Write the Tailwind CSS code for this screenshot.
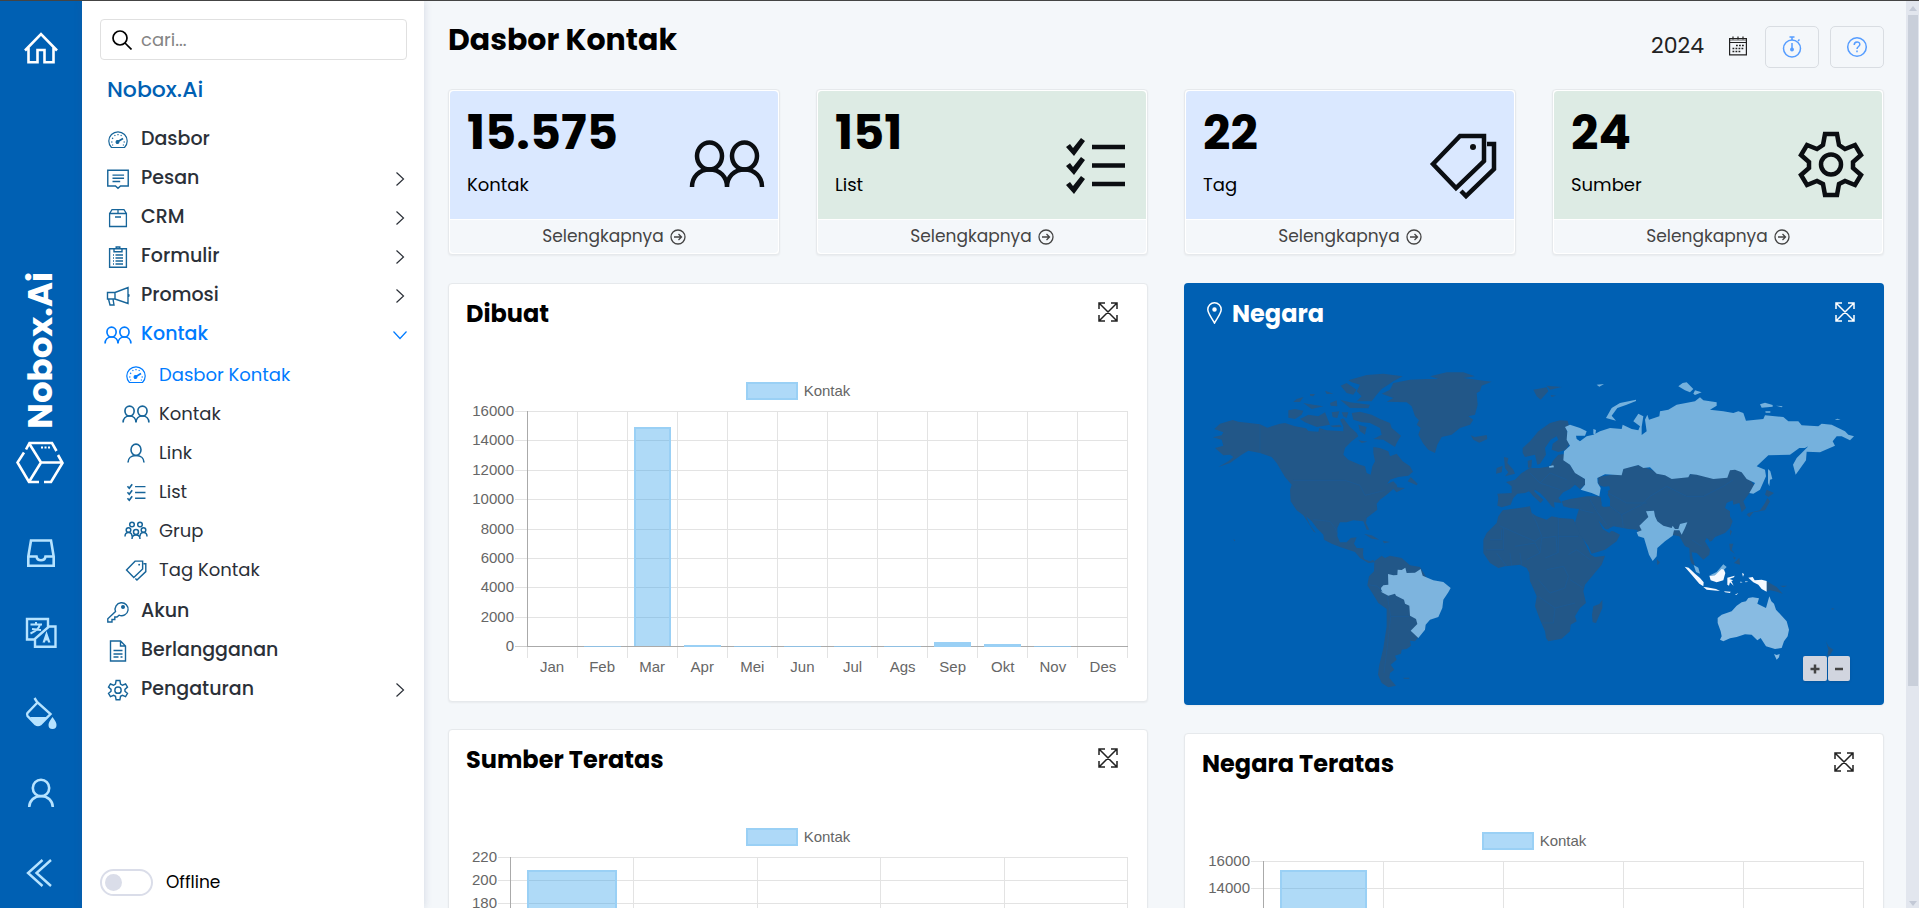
<!DOCTYPE html>
<html lang="id">
<head>
<meta charset="utf-8">
<meta name="viewport" content="width=device-width, initial-scale=1">
<title>Dasbor Kontak</title>
<script src="https://cdn.jsdelivr.net/npm/@tailwindcss/browser@4"></script>
</head>
<body class="flex h-screen overflow-hidden border-t border-[#444] bg-[#f4f7fa] font-[Poppins,Inter,sans-serif] text-black">

<svg class="hidden" xmlns="http://www.w3.org/2000/svg">
  <symbol id="people" viewBox="0 -1 76 76" fill="none" stroke="currentColor" stroke-width="4.5"><ellipse cx="20.500" cy="29" rx="12.500" ry="13.500"/><ellipse cx="55.500" cy="29" rx="12.500" ry="13.500"/><path d="M3 60c0-10 7-17.500 17.500-17.500S38 50 38 60c0-10 7-17.500 17.500-17.500S73 50 73 60"/></symbol>
  <symbol id="checks" viewBox="0 0 76 76"><path d="M35 21h33M35 39.500h33M35 58h33" fill="none" stroke="currentColor" stroke-width="4.500"/><path d="M9 21l4-3 3 4 8-10 4 3-11 15zM9 40l4-3 3 4 8-10 4 3-11 15zM9 59l4-3 3 4 8-10 4 3-11 15z" fill="currentColor"/></symbol>
  <symbol id="tags" viewBox="0 0 76 76" fill="none" stroke="currentColor" stroke-width="4.500"><path d="M8 38 35 10h24v25L31 62zM62 18h7v25L41 70l-5-5"/><circle cx="48" cy="21" r="3" fill="currentColor" stroke="none"/></symbol>
  <symbol id="gear" viewBox="0 0 76 76" fill="none" stroke="currentColor" stroke-width="4.500"><path d="M32 8h12l2 11 6 4 10-4 6 10-8 7v6l8 7-6 10-10-4-6 3-2 11H32l-2-11-6-3-10 4-6-10 8-7v-6l-8-7 6-10 10 4 6-4z"/><circle cx="38" cy="38.500" r="10"/></symbol>
  <symbol id="gauge" viewBox="0 0 20 20" fill="none" stroke="currentColor" stroke-width="1.200"><path d="M3.500 17.500C1.500 15.500.8 13.500.8 11a9.200 9.200 0 0 1 18.400 0c0 2.500-.7 4.500-2.700 6.500z"/><path d="M10 11.500l5-3" stroke-width="1.800"/><circle cx="9.500" cy="12" r="1.400" fill="currentColor"/><path d="M3 12h1.500M4 8l1.200.6M6.500 5l.8 1M10 4v1.300M13.500 5l-.7 1M15.500 12H17M4 15h1.200M14.800 15H16"/></symbol>
  <symbol id="message" viewBox="0 0 20 20" fill="none" stroke="currentColor" stroke-width="1.300"><path d="M.7 2h18.600v14.300h-7L10 18.500l-2.300-2.200h-7zM5 6.500h10.500M5 9.300h10.500M5 12.200h7"/></symbol>
  <symbol id="box" viewBox="0 0 20 20" fill="none" stroke="currentColor" stroke-width="1.300"><path d="M1.600 5.500h16.800v13H1.600zM1.600 5.500 4 1.700h12l2.400 3.800M10 1.700v3.800M7 9h6"/></symbol>
  <symbol id="form" viewBox="0 0 20 22" fill="none" stroke="currentColor" stroke-width="1.400"><path d="M1.600 2.700h16.800v18.600H1.600zM6 2.700v3h8v-3h-2.200V1H8.200v1.700zM5 9h1M7.500 9H15M5 12h1M7.500 12H15M5 15h1M7.500 15H15M5 18h1M7.500 18H15"/></symbol>
  <symbol id="horn" viewBox="0 0 24 20" fill="none" stroke="currentColor" stroke-width="1.400"><path d="M1.500 6.500h7.500L22 1.500v16L9 13H1.500zM9 6.500V13M2.500 13l1.500 6h4l-1-6M22 8c1.300.5 1.300 2.500 0 3"/></symbol>
  <symbol id="person" viewBox="0 0 20 20" fill="none" stroke="currentColor" stroke-width="1.600"><ellipse cx="10" cy="6.800" rx="5" ry="5.700"/><path d="M2 19.500c0-4 3-7 8-7s8 3 8 7"/></symbol>
  <symbol id="group" viewBox="0 0 24 20" fill="none" stroke="currentColor" stroke-width="1.500"><circle cx="8" cy="3.500" r="2.300"/><circle cx="16" cy="3.500" r="2.300"/><circle cx="4.500" cy="9" r="2.300"/><circle cx="19.500" cy="9" r="2.300"/><circle cx="12" cy="11" r="2.500"/><path d="M1 15.500c0-2.500 1.500-4 3.500-4S8 13 8 15.500M16 15.500c0-2.500 1.500-4 3.500-4s3.500 1.500 3.500 4M8 18c0-2.500 1.500-4 4-4s4 1.500 4 4"/></symbol>
  <symbol id="key" viewBox="0 0 22 22" fill="none" stroke="currentColor" stroke-width="1.400"><path d="M8.500 10.500a6.500 6.500 0 1 1 3.500 3.700L10 16H7.800v2.500H5V21H.8v-3.300z"/><circle cx="16" cy="6" r="1.300" fill="currentColor"/></symbol>
  <symbol id="doc" viewBox="0 0 20 22" fill="none" stroke="currentColor" stroke-width="1.400"><path d="M2.500 1h10l5 5v15h-15zM12.500 1v5h5M5.500 10.500h9M5.500 14h9M5.500 17h5M12.500 17h2"/></symbol>
  <symbol id="chev" viewBox="0 0 10 16" fill="none" stroke="currentColor" stroke-width="1.200"><path d="M1.500 1.500 8.500 8l-7 6.500"/></symbol>
  <symbol id="expand" viewBox="0 0 20 20" fill="none" stroke="currentColor" stroke-width="1.500"><path d="M1 7V1h6M13 1h6v6M19 13v6h-6M7 19H1v-6M1 1l18 18M19 1 1 19"/></symbol>
  <symbol id="go" viewBox="0 0 16 16" fill="none" stroke="currentColor" stroke-width="1.300"><circle cx="8" cy="8" r="7"/><path d="M4 8h7.500M8.500 5l3 3-3 3"/></symbol>
</svg>

<!-- Icon rail -->
<nav aria-label="Utama" class="flex w-[82px] shrink-0 flex-col items-center bg-[#0060b3] pt-[31px] pb-[19px] text-[#b6e3ff]">
  <a href="#" aria-label="Beranda" class="text-white">
    <svg class="size-[34px]" viewBox="0 0 34 34" fill="none" stroke="currentColor" stroke-width="2.600"><path d="M1 18.500 17 2l16 16.500M4.500 15.500v14.700h9V18h7v12.200h9V15.500"/></svg>
  </a>
  <div class="mt-auto mr-[2px] flex flex-col items-center gap-3 text-white">
    <span class="rotate-180 text-[34px] leading-9 font-bold [writing-mode:vertical-rl]">Nobox.Ai</span>
    <svg class="h-[43px] w-12" viewBox="0 0 48 43" fill="none" stroke="currentColor" stroke-width="2.600"><path d="M8 11.500 1.500 21.500 13 41h10M10 8.500 13.500 2H36l4.500 8M42 14l4.500 8L35 41h-7M13.500 3 25 21.500h21M25 21.500 13.500 40"/><path d="M25 6.500h9" stroke-dasharray="2 1.500" stroke-width="2.200"/></svg>
  </div>
  <div class="mt-[53px] flex flex-col items-center gap-12">
    <button type="button" aria-label="Kotak masuk"><svg class="size-8" viewBox="0 0 32 32" fill="none" stroke="currentColor" stroke-width="2.600"><path d="M3.300 19.500 6 3.500h20l2.700 16v9.200H3.300zM3.300 19.500h8.200c.8 5 8.200 5 9 0h8.200"/></svg></button>
    <button type="button" aria-label="Bahasa"><svg class="size-8" viewBox="0 0 32 32" fill="none" stroke="currentColor" stroke-width="2.400"><path d="M10 22.500H2V2h21v8M24 9.500h6.500v20.300H10v-8z"/><path d="M5.500 7.500H17M11 5v2.500M15 7.500c-1 4-5 7-9.500 9M7 12l9 1" stroke-width="2"/><path d="M17.500 25.500 21.500 14l4 11.500h-2.500l-.5-2h-2l-.5 2z" fill="currentColor" stroke="none"/></svg></button>
    <button type="button" aria-label="Tema"><svg class="size-8" viewBox="0 0 32 32" fill="none" stroke="currentColor" stroke-width="2.400"><path d="M9.500 1 12 5 25.500 17 15.500 27.200q-2.500 1.500-5 0L2.500 19q-1-1.500 0-3L12.500 5.500"/><path d="M5 20h18l-8 8q-2 1-4 0zM27.500 20c3 4 4 6 4 8a4 4 0 0 1-8 0c0-2 1-4 4-8z" fill="currentColor" stroke="none"/></svg></button>
    <button type="button" aria-label="Profil"><svg class="size-8" viewBox="0 0 32 32" fill="none" stroke="currentColor" stroke-width="2.600"><circle cx="16" cy="11" r="8.200"/><path d="M4.200 30c0-6 5-11 11.800-11s11.800 5 11.800 11"/></svg></button>
    <button type="button" aria-label="Ciutkan"><svg class="size-8" viewBox="0 0 32 32" fill="none" stroke="currentColor" stroke-width="2.400"><path d="M17.500 3 3 16l14.500 13M26 3 11.500 16 26 29"/></svg></button>
  </div>
</nav>

<!-- Menu -->
<aside class="flex w-[342px] shrink-0 flex-col bg-white pt-[18px] pr-[17px] pb-3 pl-[18px] text-[19px] font-medium text-[#2b3038] shadow-[0_0_8px_rgba(60,80,120,0.18)]">
  <label class="flex h-[41px] items-center gap-[9px] rounded border border-[#e0e0e0] pl-[11px]">
    <svg class="size-5 shrink-0 text-black" viewBox="0 0 20 20" fill="none" stroke="currentColor" stroke-width="1.700"><circle cx="8" cy="8" r="7"/><path d="m13 13 6.500 6.500"/></svg>
    <input type="search" placeholder="cari..." aria-label="cari" class="w-full bg-transparent text-[18px] font-normal outline-none placeholder:text-[#858585]">
  </label>
  <h2 class="mt-[15px] ml-[7px] text-[22px] leading-[30px] text-[#0060b3]">Nobox.Ai</h2>
  <ul class="mt-[15px] text-[#2b3038]">
    <li><a href="#" class="flex h-[39px] items-center gap-[9px]"><svg class="ml-1 h-5 w-7 text-[#17659a]"><use href="#gauge"/></svg>Dasbor</a></li>
    <li><a href="#" class="flex h-[39px] items-center gap-[9px]"><svg class="ml-1 h-[22px] w-7 text-[#17659a]"><use href="#message"/></svg>Pesan<svg class="mr-[2px] ml-auto h-4 w-[10px]"><use href="#chev"/></svg></a></li>
    <li><a href="#" class="flex h-[39px] items-center gap-[9px]"><svg class="ml-1 h-5 w-7 text-[#17659a]"><use href="#box"/></svg>CRM<svg class="mr-[2px] ml-auto h-4 w-[10px]"><use href="#chev"/></svg></a></li>
    <li><a href="#" class="flex h-[39px] items-center gap-[9px]"><svg class="ml-1 h-[22px] w-7 text-[#17659a]"><use href="#form"/></svg>Formulir<svg class="mr-[2px] ml-auto h-4 w-[10px]"><use href="#chev"/></svg></a></li>
    <li><a href="#" class="flex h-[39px] items-center gap-[9px]"><svg class="ml-1 h-5 w-7 text-[#17659a]"><use href="#horn"/></svg>Promosi<svg class="mr-[2px] ml-auto h-4 w-[10px]"><use href="#chev"/></svg></a></li>
    <li>
      <a href="#" class="flex h-[39px] items-center gap-[9px] text-[#007bff]"><svg class="ml-1 size-7"><use href="#people"/></svg>Kontak<svg class="mr-[2px] ml-auto h-4 w-[10px] rotate-90"><use href="#chev"/></svg></a>
      <ul class="pt-px pb-[3px] pl-[18px] text-[18px] font-normal">
        <li><a href="#" aria-current="page" class="flex h-[39px] items-center gap-[9px] text-[#007bff]"><svg class="ml-1 h-5 w-7"><use href="#gauge"/></svg>Dasbor Kontak</a></li>
        <li><a href="#" class="flex h-[39px] items-center gap-[9px]"><svg class="ml-1 size-7 text-[#17659a]"><use href="#people"/></svg>Kontak</a></li>
        <li><a href="#" class="flex h-[39px] items-center gap-[9px]"><svg class="ml-1 h-5 w-7 text-[#17659a]"><use href="#person"/></svg>Link</a></li>
        <li><a href="#" class="flex h-[39px] items-center gap-[9px]"><svg class="ml-1 h-6 w-7 text-[#17659a]"><use href="#checks"/></svg>List</a></li>
        <li><a href="#" class="flex h-[39px] items-center gap-[9px]"><svg class="ml-1 h-5 w-7 text-[#17659a]"><use href="#group"/></svg>Grup</a></li>
        <li><a href="#" class="flex h-[39px] items-center gap-[9px]"><svg class="ml-1 h-6 w-7 text-[#17659a]"><use href="#tags"/></svg>Tag Kontak</a></li>
      </ul>
    </li>
    <li><a href="#" class="flex h-[39px] items-center gap-[9px]"><svg class="ml-1 h-[22px] w-7 text-[#17659a]"><use href="#key"/></svg>Akun</a></li>
    <li><a href="#" class="flex h-[39px] items-center gap-[9px]"><svg class="ml-1 h-[22px] w-7 text-[#17659a]"><use href="#doc"/></svg>Berlangganan</a></li>
    <li><a href="#" class="flex h-[39px] items-center gap-[9px]"><svg class="ml-1 h-6 w-7 text-[#17659a]"><use href="#gear"/></svg>Pengaturan<svg class="mr-[2px] ml-auto h-4 w-[10px]"><use href="#chev"/></svg></a></li>
  </ul>
  <label class="mt-auto flex items-center gap-[13px] text-[17px] font-normal text-black">
    <input type="checkbox" class="h-[27px] w-[53px] appearance-none rounded-full border-2 border-[#dadde9] before:mt-[3px] before:ml-[3px] before:block before:size-[17px] before:rounded-full before:bg-[#dadde9] checked:before:ml-7">
    Offline
  </label>
</aside>

<!-- Content -->
<main class="min-w-0 flex-1 overflow-y-auto pt-[25px] pr-[22px] pb-6 pl-6 [scrollbar-width:none]">
  <header class="flex h-[63px] items-start">
    <h1 class="text-[30px] leading-[28px] font-bold">Dasbor Kontak</h1>
    <div class="ml-auto flex items-center gap-[11px] text-[#222]">
      <button type="button" class="mr-[6px] flex items-center gap-6 pb-[2px] text-[22px] leading-8">2024
        <svg class="size-5" viewBox="0 0 20 20" fill="none" stroke="currentColor" stroke-width="1.200"><path d="M1.600 2.500h16.800v16.300H1.600zM1.600 6.500h16.800M5 .5v3M10 .5v3M15 .5v3"/><path d="M1.600 4h16.800" stroke-opacity=".6"/><path d="M8 9.500h8M4.500 12.500H16M4.500 15.500H13" stroke-dasharray="1.800 1.200" stroke-width="1.600"/></svg>
      </button>
      <button type="button" aria-label="Waktu" class="flex h-[42px] w-[54px] items-center justify-center rounded-[5px] border border-[#d9dde2] text-[#569dff]"><svg class="size-[22px]" viewBox="0 0 22 22" fill="none" stroke="currentColor" stroke-width="1.500"><circle cx="11" cy="12.500" r="8.500"/><path d="M8.500 1h5M11 1v3M17 5l1.500-1.500M11 7v8"/><circle cx="11" cy="13.500" r="1.200" fill="currentColor"/></svg></button>
      <button type="button" aria-label="Bantuan" class="flex h-[42px] w-[54px] items-center justify-center rounded-[5px] border border-[#d9dde2] text-[#569dff]"><svg class="size-[22px]" viewBox="0 0 22 22" fill="none" stroke="currentColor" stroke-width="1.500"><circle cx="11" cy="11" r="9.300"/><path d="M8.200 9c0-4 5.600-4 5.600-.5 0 2-2.800 2-2.800 4.500M11 14.500v1.700"/></svg></button>
    </div>
  </header>

  <section class="grid grid-cols-4 gap-9">
    <article class="rounded border border-[#e6e9ec] bg-white p-px shadow-xs">
      <div class="flex h-32 items-center justify-between rounded-t bg-[#dae8ff] pr-[13px] pl-[17px]"><div><p class="text-[48px] leading-[48px] font-bold">15.575</p><p class="mt-4 mb-1 text-[18px] leading-6">Kontak</p></div><svg class="mt-[18px] size-[76px] text-[#0b0e12]"><use href="#people"/></svg></div>
      <a href="#" class="mt-px flex h-[33px] items-center justify-center gap-[6px] rounded-b bg-[#f4f7fa] text-[17px] text-[#444]">Selengkapnya <svg class="size-4"><use href="#go"/></svg></a>
    </article>
    <article class="rounded border border-[#e6e9ec] bg-white p-px shadow-xs">
      <div class="flex h-32 items-center justify-between rounded-t bg-[#ddebe4] pr-[13px] pl-[17px]"><div><p class="text-[48px] leading-[48px] font-bold">151</p><p class="mt-4 mb-1 text-[18px] leading-6">List</p></div><svg class="mt-[18px] size-[76px] text-[#0b0e12]"><use href="#checks"/></svg></div>
      <a href="#" class="mt-px flex h-[33px] items-center justify-center gap-[6px] rounded-b bg-[#f4f7fa] text-[17px] text-[#444]">Selengkapnya <svg class="size-4"><use href="#go"/></svg></a>
    </article>
    <article class="rounded border border-[#e6e9ec] bg-white p-px shadow-xs">
      <div class="flex h-32 items-center justify-between rounded-t bg-[#dae8ff] pr-[13px] pl-[17px]"><div><p class="text-[48px] leading-[48px] font-bold">22</p><p class="mt-4 mb-1 text-[18px] leading-6">Tag</p></div><svg class="mt-[18px] size-[76px] text-[#0b0e12]"><use href="#tags"/></svg></div>
      <a href="#" class="mt-px flex h-[33px] items-center justify-center gap-[6px] rounded-b bg-[#f4f7fa] text-[17px] text-[#444]">Selengkapnya <svg class="size-4"><use href="#go"/></svg></a>
    </article>
    <article class="rounded border border-[#e6e9ec] bg-white p-px shadow-xs">
      <div class="flex h-32 items-center justify-between rounded-t bg-[#ddebe4] pr-[13px] pl-[17px]"><div><p class="text-[48px] leading-[48px] font-bold">24</p><p class="mt-4 mb-1 text-[18px] leading-6">Sumber</p></div><svg class="mt-[18px] size-[76px] text-[#0b0e12]"><use href="#gear"/></svg></div>
      <a href="#" class="mt-px flex h-[33px] items-center justify-center gap-[6px] rounded-b bg-[#f4f7fa] text-[17px] text-[#444]">Selengkapnya <svg class="size-4"><use href="#go"/></svg></a>
    </article>
  </section>

  <div class="mt-7 grid grid-cols-2 items-start gap-9">
    <div class="flex min-w-0 flex-col gap-[27px]">
      <section class="rounded border border-[#e6e9ec] bg-white pb-[25px] shadow-xs">
        <div class="flex items-start justify-between pt-[18px] pr-[29px] pl-[17px]"><h2 class="text-[24px] leading-[24px] font-bold">Dibuat</h2><button type="button" aria-label="Perbesar" class="text-[#222]"><svg class="size-5"><use href="#expand"/></svg></button></div>
        <div class="mt-[56px] flex h-[18px] items-center justify-center gap-[6px] font-[Liberation_Sans,sans-serif] text-[15px] text-[#666]"><span class="h-[18px] w-[52px] border-2 border-[#9ad0f5] bg-[#aed9f8]"></span>Kontak</div>
        <div class="mt-[2px] flex pr-[19px] font-[Liberation_Sans,sans-serif] text-[15px] leading-[18px] text-[#666]">
          <ol class="flex h-[253px] w-[66px] flex-col justify-between pr-px text-right"><li>16000</li><li>14000</li><li>12000</li><li>10000</li><li>8000</li><li>6000</li><li>4000</li><li>2000</li><li>0</li></ol>
          <div class="min-w-0 flex-1 pt-2">
            <svg class="block h-[248px] w-full" viewBox="0 0 613 248" preserveAspectRatio="none" shape-rendering="crispEdges" fill="none">
              <path stroke="#e3e3e3" d="M0 1.500h613M0 30.500h613M0 60.500h613M0 89.500h613M0 119.500h613M0 148.500h613M0 177.500h613M0 207.500h613M62.500 1v247M112.500 1v247M162.500 1v247M212.500 1v247M262.500 1v247M312.500 1v247M362.500 1v247M412.500 1v247M462.500 1v247M512.500 1v247M562.500 1v247M612.500 1v247M12.500 236v12"/>
              <path stroke="#aaa" d="M12.500 1v236M12 236.500h601"/><path stroke="#ccc" d="M0 236.500h12"/>
              <path fill="#36a2eb" fill-opacity=".4" d="M119 17h37v219h-37z"/><path stroke="#9ad0f5" stroke-width="2" d="M120 236V18h35v218"/>
              <path fill="#9ad0f5" d="M169 235h37v2h-37zM419 232h37v5h-37zM469 234h37v3h-37z"/><path stroke="#8fbfe2" d="M69 236.500h37M219 236.500h37M269 236.500h37M319 236.500h37M369 236.500h37M519 236.500h37"/>
            </svg>
            <div class="grid grid-cols-12 pl-3 text-center"><span>Jan</span><span>Feb</span><span>Mar</span><span>Apr</span><span>Mei</span><span>Jun</span><span>Jul</span><span>Ags</span><span>Sep</span><span>Okt</span><span>Nov</span><span>Des</span></div>
          </div>
        </div>
      </section>

      <section class="rounded border border-[#e6e9ec] bg-white pb-[25px] shadow-xs">
        <div class="flex items-start justify-between pt-[18px] pr-[29px] pl-[17px]"><h2 class="text-[24px] leading-[24px] font-bold">Sumber Teratas</h2><button type="button" aria-label="Perbesar" class="text-[#222]"><svg class="size-5"><use href="#expand"/></svg></button></div>
        <div class="mt-[56px] flex h-[18px] items-center justify-center gap-[6px] font-[Liberation_Sans,sans-serif] text-[15px] text-[#666]"><span class="h-[18px] w-[52px] border-2 border-[#9ad0f5] bg-[#aed9f8]"></span>Kontak</div>
        <div class="mt-[2px] flex pr-[19px] font-[Liberation_Sans,sans-serif] text-[15px] leading-[18px] text-[#666]">
          <ol class="flex h-[271px] w-[49px] flex-col justify-between pr-px text-right"><li>220</li><li>200</li><li>180</li><li>160</li><li>140</li><li>120</li><li>100</li><li>80</li><li>60</li><li>40</li><li>20</li><li>0</li></ol>
          <div class="min-w-0 flex-1 pt-2">
            <svg class="block h-[267px] w-full" viewBox="0 0 630 267" preserveAspectRatio="none" shape-rendering="crispEdges" fill="none">
              <path stroke="#e3e3e3" d="M0 1.500h630M0 24.500h630M0 47.500h630M0 70.500h630M0 93.500h630M0 116.500h630M0 139.500h630M0 162.500h630M0 185.500h630M0 208.500h630M0 231.500h630M135.500 1v265M259.500 1v265M382.500 1v265M506.500 1v265M629.500 1v265"/>
              <path stroke="#aaa" d="M12.500 1v254M0 254.500h630"/>
              <path fill="#36a2eb" fill-opacity=".4" d="M29 14h90v240H29z"/><path stroke="#9ad0f5" stroke-width="2" d="M30 254V15h88v239"/>
            </svg>
          </div>
        </div>
      </section>
    </div>

    <div class="flex min-w-0 flex-col gap-[28px]">
      <section class="relative rounded bg-[#0060b3] text-white shadow-xs">
        <div class="flex items-start justify-between pt-[19px] pr-[29px] pl-[23px]"><h2 class="flex items-start gap-[10px] text-[24px] leading-[24px] font-bold"><svg class="h-[22px] w-[15px]" viewBox="0 0 15 22" fill="none" stroke="currentColor" stroke-width="1.500"><path d="M7.500 21C4 15 .8 11 .8 7.500a6.700 6.700 0 0 1 13.400 0c0 3.500-3.200 7.500-6.700 13.500z"/><circle cx="7.500" cy="7.500" r="1.500" fill="currentColor"/></svg>Negara</h2><button type="button" aria-label="Perbesar"><svg class="size-5"><use href="#expand"/></svg></button></div>
        <svg role="img" aria-label="Peta dunia" class="mt-[27px] block w-full" viewBox="0 0 2100 1056">
          <!-- Western hemisphere -->
          <g transform="translate(-12 -40)" fill="#225788">
            <path d="M103 268 120 252 158 241 175 246 240 254 262 264 300 252 315 250 345 260 378 266 385 274 415 276 418 265 440 272 490 275 490 260 480 240 490 236 510 262 530 280 535 290 515 305 495 325 490 345 505 360 540 375 555 380 560 400 572 405 577 380 585 365 580 340 580 322 600 325 625 335 630 350 650 342 668 365 690 380 699 396 685 408 655 412 630 420 622 432 640 425 650 435 652 443 675 445 650 458 640 448 620 465 600 480 590 492 592 510 560 535 558 550 568 570 560 570 550 545 520 542 500 548 480 548 472 565 472 590 480 608 500 608 512 595 530 593 522 612 530 625 550 626 549 645 552 658 570 665 580 660 583 668 565 670 540 655 525 637 505 630 480 622 455 612 432 600 430 585 410 565 395 545 378 530 390 555 408 580 400 575 385 550 370 527 350 512 332 485 330 450 335 435 315 412 290 370 275 352 240 340 205 333 185 345 150 370 115 382 145 365 160 352 150 345 130 347 105 325 130 318 125 300 98 293 125 287 130 278z"/>
            <path d="M515 220 540 216 575 225 600 238 630 250 635 265 663 288 650 310 645 322 610 300 580 298 605 285 600 265 570 250 545 248 520 240zM505 122 560 106 610 102 668 110 640 125 625 135 605 148 590 165 575 185 530 185 545 170 530 155 540 135 515 128zM482 138 500 130 530 150 520 165 500 160zM480 180 510 188 570 195 565 206 510 205zM325 212 345 208 370 213 365 225 345 238 325 234zM360 238 385 225 415 230 435 218 450 255 410 262 375 248zM340 187 350 178 370 172 360 187zM370 190 400 195 430 200 395 208zM450 190 470 182 472 200 452 198zM455 218 478 215 472 235 458 232zM435 153 460 162 440 163zM485 218 505 218 500 235 490 230zM535 255 560 262 555 285 540 275zM535 302 562 306 545 310zM450 258 480 255 485 262 460 263zM390 163 405 163 400 170 390 168z"/>
            <path d="M683 425 692 412 713 432 710 437zM553 583 575 587 598 600 575 597zM608 603 630 607 612 611zM670 1014h18v3h-16zM160 599l6 2-3 4z"/>
            <path d="M605 162 630 150 640 130 690 120 740 118 775 118 750 110 800 98 850 98 885 110 850 115 900 122 935 126 905 138 900 155 890 160 893 195 885 225 865 230 880 240 870 255 840 265 815 285 785 292 772 315 765 340 745 330 730 312 715 285 722 265 710 255 717 242 705 230 695 200 680 188 620 186 640 175z"/>
            <path d="M872 287 885 292 920 286 922 298 898 309 880 300z"/>
            <path d="M583 665 605 648 615 655 630 648 665 655 690 677 720 682 740 715 735 860 712 896 705 905 690 903 693 918 680 928 665 930 663 942 645 948 650 960 632 975 643 990 630 1000 628 1015 648 1038 625 1043 605 1030 594 1005 597 980 610 925 620 860 620 808 595 790 580 765 562 737 567 710 582 695z"/>
            <path fill="#7db4de" d="M603 745 610 737 625 735 624 703 640 707 652 706 653 690 665 691 676 684 680 700 705 699 722 688 728 708 760 722 790 727 812 745 805 758 790 780 787 805 775 832 750 840 737 855 735 870 715 895 692 873 712 853 708 838 690 828 688 798 675 792 672 780 648 768 645 762 625 768 605 758z"/>
            <path fill="none" stroke="#195a98" stroke-width="2" d="M240 254v86M340 422h155l45 15 15 30 60-15M400 540l50 5 15 20 8 18M622 770l10 60-10 90-10 80M632 830l55 0M567 735l25 5 15 15"/>
          </g>
          <!-- Eastern hemisphere -->
          <g transform="translate(1038 -40)" fill="#225788">
            <path d="M10 150 50 143 55 155 32 180 20 170zM50 138 95 142 60 150zM62 166 78 168 65 172z"/>
            <path d="M-78 352-65 355-68 370-50 390-45 402-75 410-65 398-75 385zM-100 385-82 378-85 398-102 402zM-7 363 6 360 4 384-6 384z"/>
            <path d="M-22 325 0 305 25 275 60 250 90 242 113 243 118 262 110 270 120 310 108 330 85 337 65 330 68 312 85 300 80 290 62 300 45 325 48 345 30 372 22 375 15 345-15 352-22 340z"/>
            <path d="M-72 427-45 420-25 400 0 385 30 385 60 380 70 362 85 345 103 343 120 375 140 400 165 418 165 435 150 448 135 435 120 448 100 458 85 475 95 490 72 488 74 505 65 500 45 475 30 460 15 450 12 455 40 480 32 490 10 470-3 455-15 460-38 462-50 475-58 495-85 503-98 498-95 475-98 462-55 460-55 440z"/>
            <path d="M-82 512-55 508 0 500 5 520 20 530 50 540 65 530 90 535 130 538 140 560 155 590 170 620 182 645 195 652 225 648 215 675 190 705 165 735 160 755 168 790 150 805 135 830 140 845 122 855 120 875 95 897 55 905 48 895 45 875 30 840 15 800 20 770 5 735 0 725-2 700-10 685-30 675-75 680-95 685-120 670-140 640-140 600-130 580-100 550-95 530zM217 780 217 805 198 850 188 848 186 825 190 800 208 793z"/>
            <path d="M95 485 120 478 170 470 205 470 215 475 215 500 240 500 225 475 235 460 230 445 205 435 205 412 275 400 280 386 325 376 425 413 600 385 630 390 668 430 675 440 655 465 640 485 648 505 635 518 628 490 610 495 608 482 590 490 585 505 600 515 600 530 608 545 600 565 585 580 555 592 545 605 530 595 525 605 540 630 538 645 520 660 500 640 485 638 488 655 495 678 485 672 480 660 478 625 465 620 448 590 425 585 330 585 320 570 295 568 250 560 240 565 230 572 250 575 270 585 260 605 225 630 185 642 175 620 150 585 135 550 140 530 147 508 120 505 100 500z"/>
            <path fill="#0060b3" d="M205 542 225 568 245 572 238 580 218 568zM213 442 238 440 240 450 228 456 240 478 240 500 220 502 213 480z"/>
            <path d="M655 520 690 512 705 490 712 475 720 485 705 512 670 518 658 533 650 525zM710 450 732 460 715 472 705 465zM600 570 606 575 600 588zM598 612 610 612 605 630 615 642 600 632zM610 650 618 655 612 660zM612 670 628 655 630 675zM380 658 390 668 382 677zM535 598 546 596 540 608zM888 905 895 920 910 930 900 945 892 948 895 930zM885 948 880 955 868 955zM750 738 772 738 760 743zM838 822 848 830zM905 805 914 808 905 810z"/>
            <path d="M710 725 740 742 758 762 735 755 720 752 710 755z"/>
            <path fill="none" stroke="#195a98" stroke-width="2" d="M-92 558 15 605 35 590 20 550 5 520M85 535v105M85 590h60M30 640 35 595 78 590 82 640 45 655M-80 565v65h-50M-45 620 15 610 30 640-10 660M50 690 100 680 115 710 105 745 60 760 25 720M115 645 140 630 180 660M25 770 75 805 135 790M75 805 70 850 35 850M120 720 160 745M-120 600l35 0 0-30M-100 640l30 40M-60 640l5 38M-30 640l5 35M240 500l35 25 5 40M275 525l60-30 25-25 50-30 60 30 50 0 60-30 30 -20M235 460l55 30 60 0M180 480l20 35 30 40M150 510l40 10M440 580l20-30M485 600l30 20M0 400l30 30 30-30 50 20M30 430l60 20"/>
            <g fill="#75b1dd">
              <path d="M105 262 120 255 150 265 170 275 165 288 138 288 140 298 150 305 170 290 190 285 210 275 240 265 275 268 278 255 305 268 325 272 330 260 310 245 325 222 340 230 335 262 335 286 350 275 345 240 352 225 357 240 388 230 390 215 415 210 440 195 495 185 510 173 520 182 560 188 560 198 540 210 580 215 610 220 625 215 640 220 648 243 700 238 705 227 760 232 775 245 805 245 815 257 865 260 875 252 905 255 945 275 955 285 972 290 960 302 935 290 920 290 908 305 915 318 870 338 830 336 828 362 797 405 789 375 800 355 835 320 825 325 808 325 780 345 715 347 680 380 705 390 708 410 690 450 670 462 658 460 675 430 650 418 635 398 615 390 600 392 592 414 550 418 500 405 480 403 475 413 425 418 405 407 380 402 360 383 340 385 325 376 280 388 275 407 225 404 202 415 203 430 212 445 208 470 185 460 152 450 165 435 165 418 135 400 120 375 100 362 102 335 120 318 110 300 112 275z"/>
              <path d="M714 388 721 395 727 418 720 420 718 440 714 430zM228 235 245 205 270 190 318 180 318 184 290 195 262 205 245 228 258 243zM445 140 458 130 470 128 490 148 480 158 465 152zM490 162 495 152 515 158 495 166zM690 194 705 189 728 196 728 201 695 204zM738 198 758 200 755 203zM706 215h15v4h-14zM914 241 922 237 932 240zM200 135 222 133 208 141zM190 268l8 3-2 14-6-3zM57 380 70 377 72 383 58 384z"/>
              <path d="M348 515 372 513 375 530 382 545 400 558 425 565 428 558 435 568 445 568 450 553 472 548 465 565 455 585 448 572 432 572 428 588 405 605 382 625 380 650 368 664 357 645 342 595 325 590 320 578 335 572 328 558 355 532z"/>
              <path d="M491 676 505 684 510 702 498 697zM540 707 560 697 580 674 590 682 582 690 555 707z"/>
            </g>
            <path fill="#88bbe2" d="M563 835 575 825 605 815 620 798 635 788 648 785 655 775 668 773 687 776 682 792 708 805 718 770 724 785 732 792 738 810 770 845 777 870 773 890 762 905 755 925 735 928 708 920 692 895 682 902 665 885 645 884 620 892 600 896 580 905 570 900 575 890 572 875 563 850zM732 943 740 946 749 943 747 953 740 960z"/>
            <path fill="#f5f9ff" d="M464 681 476 684 495 702 510 715 521 728 520 740 508 732 485 705zM520 742 530 743 558 748 570 754 530 750zM538 708 555 707 575 688 582 690 586 700 580 722 560 728 542 722zM592 714 614 708 612 713 598 718 610 722 604 724 611 738 600 728 597 738 592 735zM655 714 668 712 674 722 695 720 710 724 710 756 695 748 685 735 670 728zM582 755l20 1-2 4-15-2zM614 765 625 760 620 765zM636 700l6 3-3 8zM630 726l8 1-6 2zM645 725l10 1-8 2z"/>
          </g>
        </svg>
        <div class="absolute right-[34px] bottom-6 flex gap-px">
          <button type="button" aria-label="Perbesar peta" class="flex h-[25px] w-6 items-center justify-center rounded-[2px] bg-[#d1d5df] text-[#444] shadow"><svg class="size-[10px]" viewBox="0 0 10 10" stroke="currentColor" stroke-width="2.500"><path d="M5 .5v9M.5 5h9"/></svg></button>
          <button type="button" aria-label="Perkecil peta" class="flex h-[25px] w-[22px] items-center justify-center rounded-[2px] bg-[#d1d5df] text-[#444] shadow"><svg class="size-[10px]" viewBox="0 0 10 10" stroke="currentColor" stroke-width="2.500"><path d="M1 5h8"/></svg></button>
        </div>
      </section>

      <section class="rounded border border-[#e6e9ec] bg-white pb-[25px] shadow-xs">
        <div class="flex items-start justify-between pt-[18px] pr-[29px] pl-[17px]"><h2 class="text-[24px] leading-[24px] font-bold">Negara Teratas</h2><button type="button" aria-label="Perbesar" class="text-[#222]"><svg class="size-5"><use href="#expand"/></svg></button></div>
        <div class="mt-[56px] flex h-[18px] items-center justify-center gap-[6px] font-[Liberation_Sans,sans-serif] text-[15px] text-[#666]"><span class="h-[18px] w-[52px] border-2 border-[#9ad0f5] bg-[#aed9f8]"></span>Kontak</div>
        <div class="mt-[2px] flex pr-[19px] font-[Liberation_Sans,sans-serif] text-[15px] leading-[18px] text-[#666]">
          <ol class="flex h-[234px] w-[66px] flex-col justify-between pr-px text-right"><li>16000</li><li>14000</li><li>12000</li><li>10000</li><li>8000</li><li>6000</li><li>4000</li><li>2000</li><li>0</li></ol>
          <div class="min-w-0 flex-1 pt-2">
            <svg class="block h-[230px] w-full" viewBox="0 0 613 230" preserveAspectRatio="none" shape-rendering="crispEdges" fill="none">
              <path stroke="#e3e3e3" d="M0 1.500h613M0 28.500h613M0 55.500h613M0 82.500h613M0 109.500h613M0 136.500h613M0 163.500h613M0 190.500h613M132.500 1v228M252.500 1v228M372.500 1v228M492.500 1v228M612.500 1v228"/>
              <path stroke="#aaa" d="M12.500 1v217M0 217.500h613"/>
              <path fill="#36a2eb" fill-opacity=".4" d="M29 10h87v207H29z"/><path stroke="#9ad0f5" stroke-width="2" d="M30 217V11h85v206"/>
            </svg>
          </div>
        </div>
      </section>
    </div>
  </div>
</main>

<!-- Scrollbar -->
<div aria-hidden="true" class="flex w-[13px] shrink-0 flex-col items-center bg-[#e2e6ee] text-[#c3c9d6]">
  <svg class="mt-[5px] h-[5px] w-2" viewBox="0 0 8 5" fill="currentColor"><path d="M0 5 4 0l4 5z"/></svg>
  <div class="mt-1 h-[74%] w-[10px] bg-[#c9cfda]"></div>
  <svg class="mt-auto mb-[2px] h-[5px] w-2" viewBox="0 0 8 5" fill="currentColor"><path d="M0 0 4 5l4-5z"/></svg>
</div>
</body>
</html>
